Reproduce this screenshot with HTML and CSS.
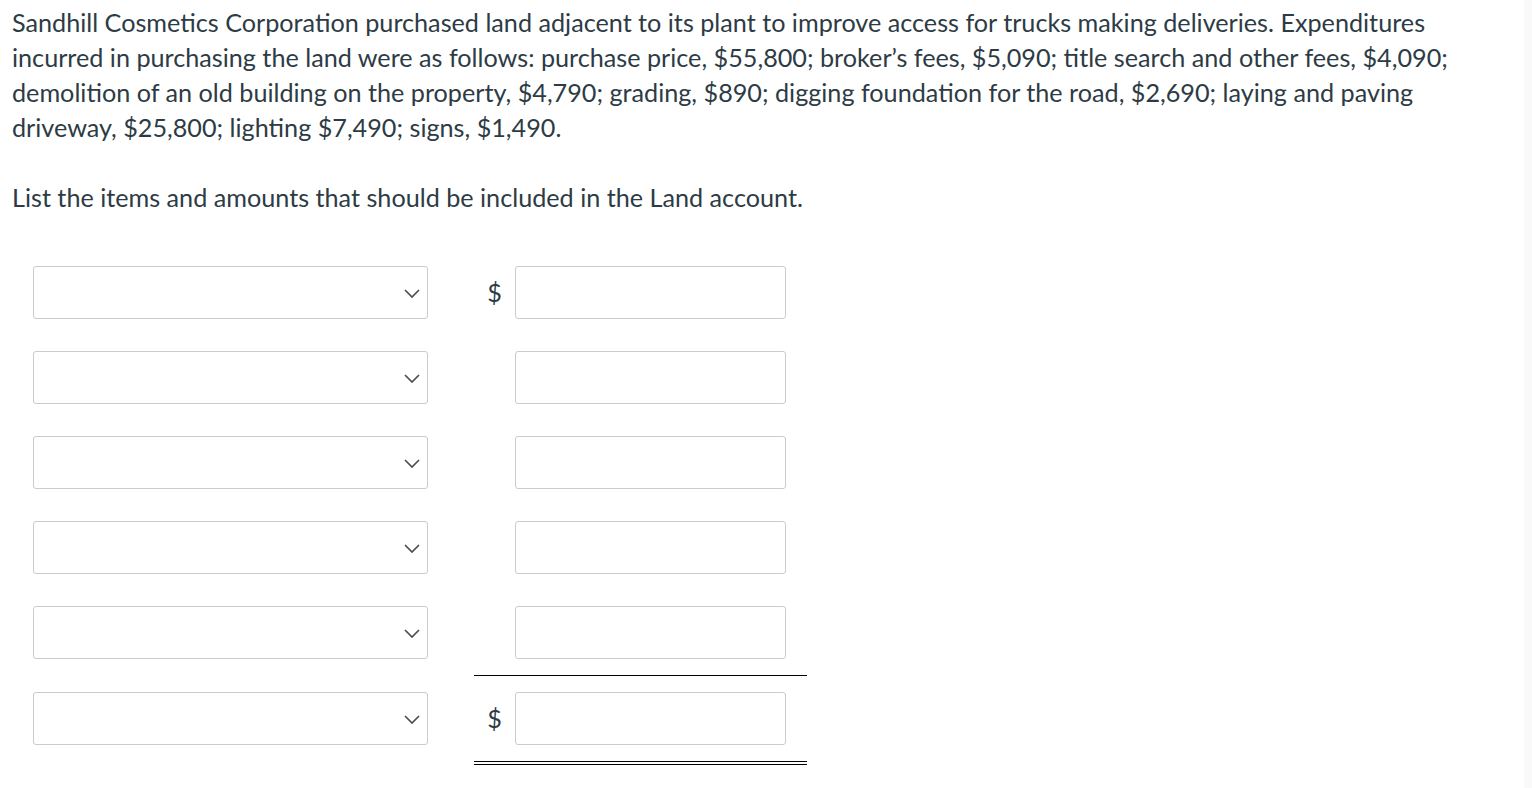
FILE: index.html
```html
<!DOCTYPE html>
<html>
<head>
<meta charset="utf-8">
<link rel="stylesheet" href="styles.css">
</head>
<body>
<div class="page">
  <main class="content">
    <p class="q">Sandhill Cosmetics Corporation purchased land adjacent to its plant to improve access for trucks making deliveries. Expenditures incurred in purchasing the land were as follows: purchase price, $55,800; broker’s fees, $5,090; title search and other fees, $4,090; demolition of an old building on the property, $4,790; grading, $890; digging foundation for the road, $2,690; laying and paving driveway, $25,800; lighting $7,490; signs, $1,490.</p>
    <p class="q">List the items and amounts that should be included in the Land account.</p>
    <div class="sheet">
      <div class="row">
        <div class="sel-cell"><div class="select"><svg class="chev" viewBox="0 0 16 9"><path d="M1 1 L8 8 L15 1"/></svg></div></div>
        <div class="amt-cell"><span class="cur">$</span><div class="input"></div></div>
      </div>
      <div class="row">
        <div class="sel-cell"><div class="select"><svg class="chev" viewBox="0 0 16 9"><path d="M1 1 L8 8 L15 1"/></svg></div></div>
        <div class="amt-cell"><span class="cur"></span><div class="input"></div></div>
      </div>
      <div class="row">
        <div class="sel-cell"><div class="select"><svg class="chev" viewBox="0 0 16 9"><path d="M1 1 L8 8 L15 1"/></svg></div></div>
        <div class="amt-cell"><span class="cur"></span><div class="input"></div></div>
      </div>
      <div class="row">
        <div class="sel-cell"><div class="select"><svg class="chev" viewBox="0 0 16 9"><path d="M1 1 L8 8 L15 1"/></svg></div></div>
        <div class="amt-cell"><span class="cur"></span><div class="input"></div></div>
      </div>
      <div class="row">
        <div class="sel-cell"><div class="select"><svg class="chev" viewBox="0 0 16 9"><path d="M1 1 L8 8 L15 1"/></svg></div></div>
        <div class="amt-cell"><span class="cur"></span><div class="input"></div></div>
      </div>
      <div class="row total">
        <div class="sel-cell"><div class="select"><svg class="chev" viewBox="0 0 16 9"><path d="M1 1 L8 8 L15 1"/></svg></div></div>
        <div class="amt-cell"><span class="cur">$</span><div class="input"></div></div>
      </div>
    </div>
  </main>
  <div class="strip"></div>
</div>
</body>
</html>
```

FILE: styles.css
```css
html, body {
  margin: 0;
  padding: 0;
  background: #ffffff;
}

.page {
  display: flex;
  min-height: 788px;
}

.content {
  flex: 1;
  padding: 5px 12px 0 12px;
  font-family: Lato, "Liberation Sans", sans-serif;
  font-size: 25.2px;
  line-height: 35px;
  color: #2d3b45;
}

.strip {
  width: 8px;
  background: #f9f9f9;
}

.q {
  margin: 0 0 35px 0;
  max-width: 1470px;
}

.q:last-of-type {
  margin-bottom: 0;
}

.sheet {
  margin-top: 35px;
  margin-left: 21px;
  display: flex;
  flex-direction: column;
}

.row {
  display: flex;
  align-items: stretch;
}

.sel-cell {
  width: 395px;
  padding: 16px 0;
  margin-right: 46px;
}

.select {
  height: 53px;
  box-sizing: border-box;
  border: 1px solid #c8ccd0;
  border-radius: 3px;
  background: #fff;
  display: flex;
  align-items: center;
  justify-content: flex-end;
  padding-right: 7px;
}

.chev {
  width: 16px;
  height: 9px;
  fill: none;
  stroke: #4a4f54;
  stroke-width: 1.7;
  margin-top: 1px;
}

.amt-cell {
  width: 333px;
  padding: 16px 21px 16px 0;
  box-sizing: border-box;
  display: flex;
  align-items: center;
}

.cur {
  width: 41px;
  text-align: center;
  font-size: 25.2px;
  line-height: 53px;
}

.input {
  width: 271px;
  height: 53px;
  box-sizing: border-box;
  border: 1px solid #c8ccd0;
  border-radius: 3px;
  background: #fff;
}

.total .amt-cell {
  border-top: 1px solid #000;
  border-bottom: 4px double #000;
}

.total .sel-cell {
  padding-top: 17px;
}
```
